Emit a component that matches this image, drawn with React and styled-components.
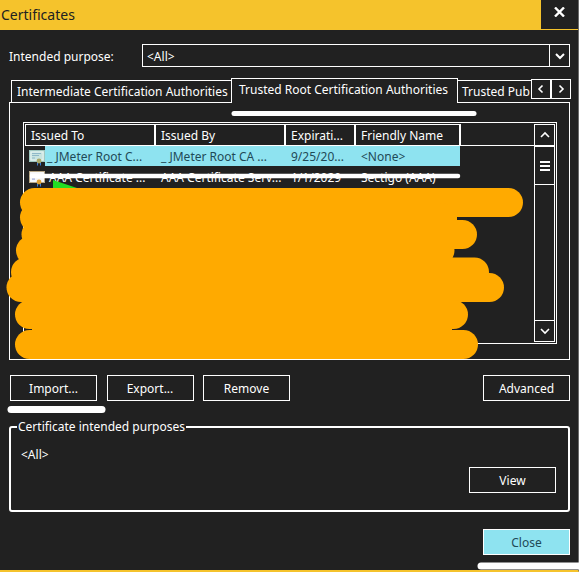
import React from "react";
import styled, { createGlobalStyle } from "styled-components";

const Global = createGlobalStyle`
  html, body { margin: 0; padding: 0; background: #fff; }
  * { box-sizing: border-box; }
`;

const Stage = styled.div`
  position: relative;
  width: 587px;
  height: 572px;
  overflow: hidden;
  font-family: "Noto Sans", "Liberation Sans", sans-serif;
  font-size: 12px;
  color: #fff;
`;

const Win = styled.div`
  width: 579px;
  height: 572px;
  background: #212121;
  border-right: 1px solid #6a6a6a;
  border-bottom: 2px solid #f5c32c;
  display: flex;
  flex-direction: column;
`;

const TitleBar = styled.div`
  height: 30px;
  flex: none;
  background: #f5c32c;
  border-bottom: 1px solid #f5c32c;
  display: flex;
  justify-content: space-between;
  color: #212121;
  font-size: 14px;
`;
const Title = styled.div`
  padding: 4px 0 0 1px;
  line-height: 21px;
`;
const CloseX = styled.div`
  width: 37px;
  height: 29px;
  background: #212121;
  display: flex;
  align-items: center;
  justify-content: center;
  padding-bottom: 5px;
`;

const PurposeRow = styled.div`
  display: flex;
  align-items: center;
  height: 23px;
  margin: 14px 8px 0 9px;
`;
const PurposeLabel = styled.div`
  width: 133px;
  flex: none;
  padding-top: 1px;
`;
const Combo = styled.div`
  flex: 1;
  height: 23px;
  border: 1px solid #fff;
  display: flex;
  align-items: center;
  justify-content: space-between;
  padding-left: 4px;
`;
const ComboValue = styled.span`
  padding-top: 1px;
`;
const ComboButton = styled.div`
  width: 20px;
  height: 21px;
  border-left: 1px solid #fff;
  display: flex;
  align-items: center;
  justify-content: center;
`;

const TabStrip = styled.div`
  height: 24px;
  margin: 11px 8px 0 11px;
  display: flex;
  align-items: flex-end;
  position: relative;
  z-index: 1;
`;
const Tab = styled.div`
  height: ${(p) => (p.$active ? 25 : 23)}px;
  width: ${(p) => p.$w}px;
  flex: none;
  border: 1px solid #fff;
  border-left-width: ${(p) => (p.$open ? 0 : 1)}px;
  border-right-width: ${(p) => (p.$open ? 0 : 1)}px;
  border-bottom-width: ${(p) => (p.$active ? 0 : 1)}px;
  margin-bottom: -1px;
  margin-left: ${(p) => (p.$active ? -1 : 0)}px;
  background: #212121;
  padding: ${(p) => (p.$active ? "1px 0 0 7px" : p.$open ? "1px 0 0 4px" : "1px 0 0 5px")};
  line-height: 20px;
  white-space: nowrap;
  overflow: hidden;
`;
const Scroller = styled.div`
  display: flex;
  align-self: flex-start;
  margin-top: 1px;
`;
const ScrollerButton = styled.div`
  width: 20px;
  height: 20px;
  border: 1px solid #fff;
  display: flex;
  align-items: center;
  justify-content: center;
  background: #212121;
`;

const Panel = styled.div`
  height: 258px;
  margin: 0 8px 0 9px;
  border: 1px solid #fff;
  padding: 19px 13px 0 13px;
`;
const ListBox = styled.div`
  width: 534px;
  height: 222px;
  border: 1px solid #fff;
  padding: 1px;
  display: flex;
`;
const ListBody = styled.div`
  flex: 1;
  min-width: 0;
`;
const HeaderRow = styled.div`
  display: flex;
  height: 22px;
  border-bottom: 1px solid #fff;
`;
const HeaderCell = styled.div`
  width: ${(p) => p.$w}px;
  height: 21px;
  border: 1px solid #fff;
  border-left-width: ${(p) => (p.$first ? 1 : 0)}px;
  border-right-width: 2px;
  border-bottom: 0;
  padding: 1px 0 0 5px;
  line-height: 20px;
  white-space: nowrap;
  overflow: hidden;
`;
const Row = styled.div`
  display: flex;
  height: 21px;
  width: 435px;
`;
const RowIcon = styled.svg`
  width: 16px;
  height: 16px;
  flex: none;
  margin: 4px 0 0 4px;
`;
const Cells = styled.div`
  display: flex;
  flex: 1;
  height: 20px;
  align-items: flex-start;
  background: ${(p) => (p.$sel ? "#8ee3f0" : "transparent")};
  color: ${(p) => (p.$sel ? "#1f4a57" : "#fff")};
`;
const Cell = styled.div`
  width: ${(p) => p.$w}px;
  flex: none;
  padding: 1px 0 0 ${(p) => p.$pad ?? 6}px;
  line-height: 19px;
  white-space: nowrap;
  overflow: hidden;
`;

const ScrollBar = styled.div`
  width: 21px;
  flex: none;
  border: 1px solid #fff;
  display: flex;
  flex-direction: column;
`;
const ScrollArrow = styled.div`
  height: 21px;
  flex: none;
  display: flex;
  align-items: center;
  justify-content: center;
  border-${(p) => p.$side}: 1px solid #fff;
`;
const ScrollThumb = styled.div`
  height: 39px;
  flex: none;
  border-top: 1px solid #fff;
  border-bottom: 1px solid #fff;
  display: flex;
  align-items: center;
  justify-content: center;
`;
const ScrollTrack = styled.div`
  flex: 1;
`;
const MenuGlyph = styled.div`
  width: 10px;
  height: 10px;
  border-top: 2px solid #fff;
  border-bottom: 2px solid #fff;
  &::after {
    content: "";
    display: block;
    height: 2px;
    margin-top: 2px;
    background: #fff;
  }
`;

const ActionRow = styled.div`
  display: flex;
  gap: 9.5px;
  margin: 15px 8px 0 10px;
`;
const Button = styled.div`
  width: 87px;
  height: 26px;
  flex: none;
  border: 1px solid #fff;
  background: ${(p) => (p.$primary ? "#8ee3f0" : "transparent")};
  color: ${(p) => (p.$primary ? "#1f4a57" : "#fff")};
  display: flex;
  align-items: center;
  justify-content: center;
  margin-left: ${(p) => (p.$push ? "auto" : "0")};
`;

const Group = styled.fieldset`
  margin: 18px 8px 0 9px;
  height: 93px;
  border: 2px solid #fff;
  border-radius: 3px;
  padding: 11px 12px 0 10px;
  min-width: 0;
`;
const GroupLegend = styled.legend`
  padding: 0 1px;
  margin-left: -4px;
  line-height: 16px;
`;
const GroupText = styled.div`
  line-height: 17px;
`;
const GroupFoot = styled.div`
  display: flex;
  justify-content: flex-end;
  margin-top: 4px;
`;
const Footer = styled.div`
  display: flex;
  justify-content: flex-end;
  margin: 17px 8px 0 0;
`;

const Overlay = styled.svg`
  position: absolute;
  left: 0;
  top: 0;
  z-index: 2;
  pointer-events: none;
`;

const Chevron = ({ d, w = 12, h = 12, sw = 2 }) => (
  <svg width={w} height={h} viewBox="0 0 12 12" fill="none" stroke="#fff" strokeWidth={sw}>
    <path d={d} />
  </svg>
);

const CertIcon = ({ frame, fill, line, seal }) => (
  <RowIcon viewBox="0 0 16 16">
    <rect x="0.5" y="0.5" width="15" height="11" fill={fill} stroke={frame} />
    <rect x="2" y="2" width="12" height="8" fill={fill} stroke="#fff" strokeWidth="0.5" />
    <path d="M3 3.500h9M3 5.500h7M3 8h3" stroke={line} strokeWidth="1" />
    <path d="M8 12h1v3.500H8zM11 12h1v3.500h-1z" fill="#3a7bd5" />
    <circle cx="10" cy="11" r="2.400" fill={seal} />
  </RowIcon>
);

const columns = [131, 130, 70, 105];

export default function App() {
  return (
    <Stage>
      <Global />
      <Win>
        <TitleBar>
          <Title>Certificates</Title>
          <CloseX>
            <svg width="11" height="10" viewBox="0 0 11 10" fill="none" stroke="#fff" strokeWidth="2.4">
              <path d="M1 0.500l9 9M10 0.500l-9 9" />
            </svg>
          </CloseX>
        </TitleBar>
        <PurposeRow>
          <PurposeLabel>Intended purpose:</PurposeLabel>
          <Combo>
            <ComboValue>&lt;All&gt;</ComboValue>
            <ComboButton>
              <Chevron d="M2 4l4 4 4-4" />
            </ComboButton>
          </Combo>
        </PurposeRow>
        <TabStrip>
          <Tab $w={221}>Intermediate Certification Authorities</Tab>
          <Tab $w={227} $active>Trusted Root Certification Authorities</Tab>
          <Tab $w={73} $open>Trusted Pub</Tab>
          <Scroller>
            <ScrollerButton><Chevron d="M7.500 2.500L4 6l3.500 3.500" sw={1.6} /></ScrollerButton>
            <ScrollerButton><Chevron d="M4.500 2.500L8 6l-3.500 3.500" sw={1.6} /></ScrollerButton>
          </Scroller>
        </TabStrip>
        <Panel>
          <ListBox>
            <ListBody>
              <HeaderRow>
                <HeaderCell $w={columns[0]} $first>Issued To</HeaderCell>
                <HeaderCell $w={columns[1]}>Issued By</HeaderCell>
                <HeaderCell $w={columns[2]}>Expirati...</HeaderCell>
                <HeaderCell $w={columns[3]}>Friendly Name</HeaderCell>
              </HeaderRow>
              <Row>
                <CertIcon frame="#9fc7c0" fill="#c8e4e0" line="#8fb8c8" seal="#a8a868" />
                <Cells $sel>
                  <Cell $w={110} $pad={2}>_ JMeter Root C...</Cell>
                  <Cell $w={130}>_ JMeter Root CA ...</Cell>
                  <Cell $w={70}>9/25/20...</Cell>
                  <Cell $w={105}>&lt;None&gt;</Cell>
                </Cells>
              </Row>
              <Row>
                <CertIcon frame="#b8a888" fill="#f4f4f4" line="#7c8cd0" seal="#e0a030" />
                <Cells>
                  <Cell $w={110} $pad={4}>AAA Certificate ...</Cell>
                  <Cell $w={130}>AAA Certificate Serv...</Cell>
                  <Cell $w={70}>1/1/2029</Cell>
                  <Cell $w={105}>Sectigo (AAA)</Cell>
                </Cells>
              </Row>
            </ListBody>
            <ScrollBar>
              <ScrollArrow $side="bottom"><Chevron d="M2 8l4-4 4 4" sw={1.6} /></ScrollArrow>
              <ScrollThumb><MenuGlyph /></ScrollThumb>
              <ScrollTrack />
              <ScrollArrow $side="top"><Chevron d="M2 4l4 4 4-4" sw={1.6} /></ScrollArrow>
            </ScrollBar>
          </ListBox>
        </Panel>
        <ActionRow>
          <Button>Import...</Button>
          <Button>Export...</Button>
          <Button>Remove</Button>
          <Button $push>Advanced</Button>
        </ActionRow>
        <Group>
          <GroupLegend>Certificate intended purposes</GroupLegend>
          <GroupText>&lt;All&gt;</GroupText>
          <GroupFoot>
            <Button>View</Button>
          </GroupFoot>
        </Group>
        <Footer>
          <Button $primary>Close</Button>
        </Footer>
      </Win>
      <Overlay width="587" height="572" viewBox="0 0 587 572">
        <g stroke="#fff" strokeLinecap="round" fill="none">
          <path d="M234 113.500H474" strokeWidth="5" />
          <path d="M32 176H458" strokeWidth="4.500" />
          <path d="M11 409.500H102" strokeWidth="7" />
          <path d="M481 566H590" strokeWidth="7" />
        </g>
        <path d="M53 188V180L77 188Z" fill="#22dd22" />
        <g stroke="#ffaa00" strokeWidth="29" strokeLinecap="round" fill="none">
          <path d="M34.500 202.500H508.500" />
          <path d="M34.500 217.500H440" />
          <path d="M36 234.500H462.500" />
          <path d="M30.500 250.500H440" />
          <path d="M25.500 272H474.500" />
          <path d="M21 287.500H489.500" />
          <path d="M29.500 314.500H453.500" />
          <path d="M29.500 344.500H463.500" />
        </g>
        <path d="M32 205H457V220H452V352H32Z" fill="#ffaa00" />
      </Overlay>
    </Stage>
  );
}
